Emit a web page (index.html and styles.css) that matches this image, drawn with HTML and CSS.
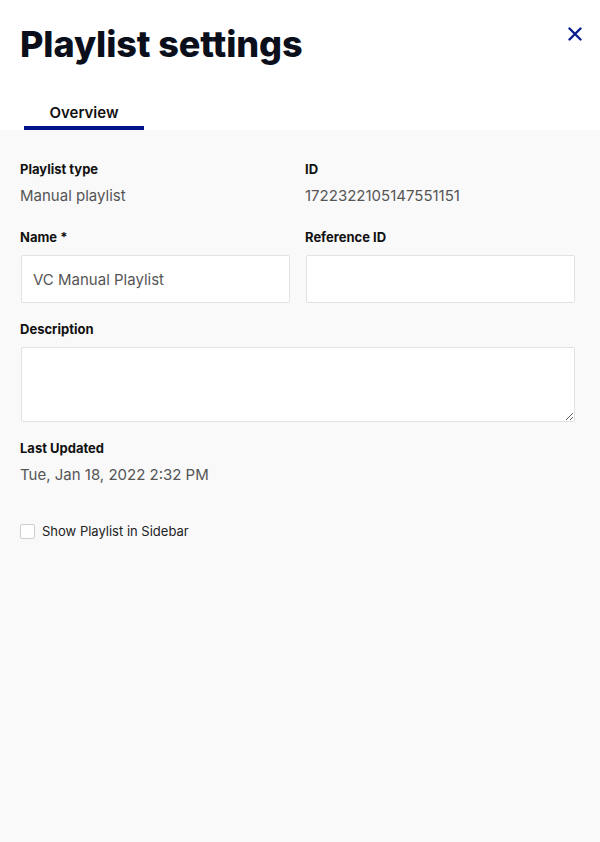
FILE: index.html
```html
<!DOCTYPE html>
<html>
<head>
<meta charset="utf-8">
<link rel="stylesheet" href="styles.css">
</head>
<body>
<div class="page">
  <header class="header">
    <h1 class="title">Playlist settings</h1>
    <button class="close" aria-label="Close">
      <svg width="14" height="14" viewBox="0 0 14 14"><path d="M1.5 1.5L12.5 12.5M12.5 1.5L1.5 12.5" stroke="#0a1f8f" stroke-width="2.4" stroke-linecap="round"/></svg>
    </button>
  </header>
  <nav class="tabs">
    <div class="tab active">Overview</div>
  </nav>
  <main class="panel">
    <div class="grid">
      <div class="field">
        <div class="label">Playlist type</div>
        <div class="value">Manual playlist</div>
      </div>
      <div class="field">
        <div class="label">ID</div>
        <div class="value">1722322105147551151</div>
      </div>
      <div class="field field-input">
        <div class="label">Name *</div>
        <input class="input" type="text" value="VC Manual Playlist">
      </div>
      <div class="field field-input">
        <div class="label">Reference ID</div>
        <input class="input" type="text" value="">
      </div>
    </div>
    <div class="field field-input">
      <div class="label">Description</div>
      <textarea class="textarea"></textarea>
    </div>
    <div class="field">
      <div class="label">Last Updated</div>
      <div class="value">Tue, Jan 18, 2022 2:32 PM</div>
    </div>
    <label class="check">
      <span class="box"></span>
      <span>Show Playlist in Sidebar</span>
    </label>
  </main>
</div>
</body>
</html>
```
FILE: styles.css
```css
* { box-sizing: border-box; }
html, body { margin: 0; height: 100%; }
body {
  font-family: Inter, "Liberation Sans", sans-serif;
  background: #fff;
  color: #111;
}
.page { display: flex; flex-direction: column; min-height: 842px; }
.header {
  display: flex;
  justify-content: space-between;
  align-items: flex-start;
  padding: 22px 14px 0 20px;
}
.title {
  margin: 0;
  font-size: 36px;
  font-weight: 800;
  line-height: 44px;
  color: #0b0f1c;
  letter-spacing: -0.1px;
}
.close {
  border: 0;
  background: none;
  padding: 4px;
  margin-top: 1px;
  cursor: pointer;
  line-height: 0;
}
.tabs {
  display: flex;
  padding: 37px 0 0 24px;
}
.tab {
  width: 120px;
  text-align: center;
  font-size: 15px;
  font-weight: 600;
  color: #111;
  padding-bottom: 3px;
  line-height: 20px;
}
.tab.active { border-bottom: 4px solid #00138d; }
.panel {
  flex: 1;
  background: #f9f9f9;
  padding: 30px 25px 20px 20px;
}
.grid {
  display: grid;
  grid-template-columns: 1fr 1fr;
  column-gap: 15px;
}
.field { margin-bottom: 22px; }
.field-input { margin-bottom: 17px; }
.label {
  font-size: 13px;
  font-weight: 700;
  line-height: 18px;
  color: #111;
  margin-bottom: 8px;
}
.field-input .label { margin-bottom: 9px; }
.value {
  font-size: 15px;
  line-height: 20px;
  color: #555;
}
.input, .textarea {
  display: block;
  width: calc(100% - 1px);
  margin-left: 1px;
  background: #fff;
  border: 1px solid #e2e2e2;
  border-radius: 2px;
  font-family: inherit;
  font-size: 15px;
  color: #555;
  outline: none;
}
.input { height: 48px; padding: 0 11px; }
.textarea { height: 75px; resize: vertical; }
.check {
  display: flex;
  align-items: center;
  gap: 7px;
  margin-top: 38px;
  font-size: 13px;
  line-height: 16px;
  color: #222;
}
.box {
  width: 15px;
  height: 15px;
  border: 1px solid #cfcfcf;
  border-radius: 2px;
  background: #fff;
}
```
